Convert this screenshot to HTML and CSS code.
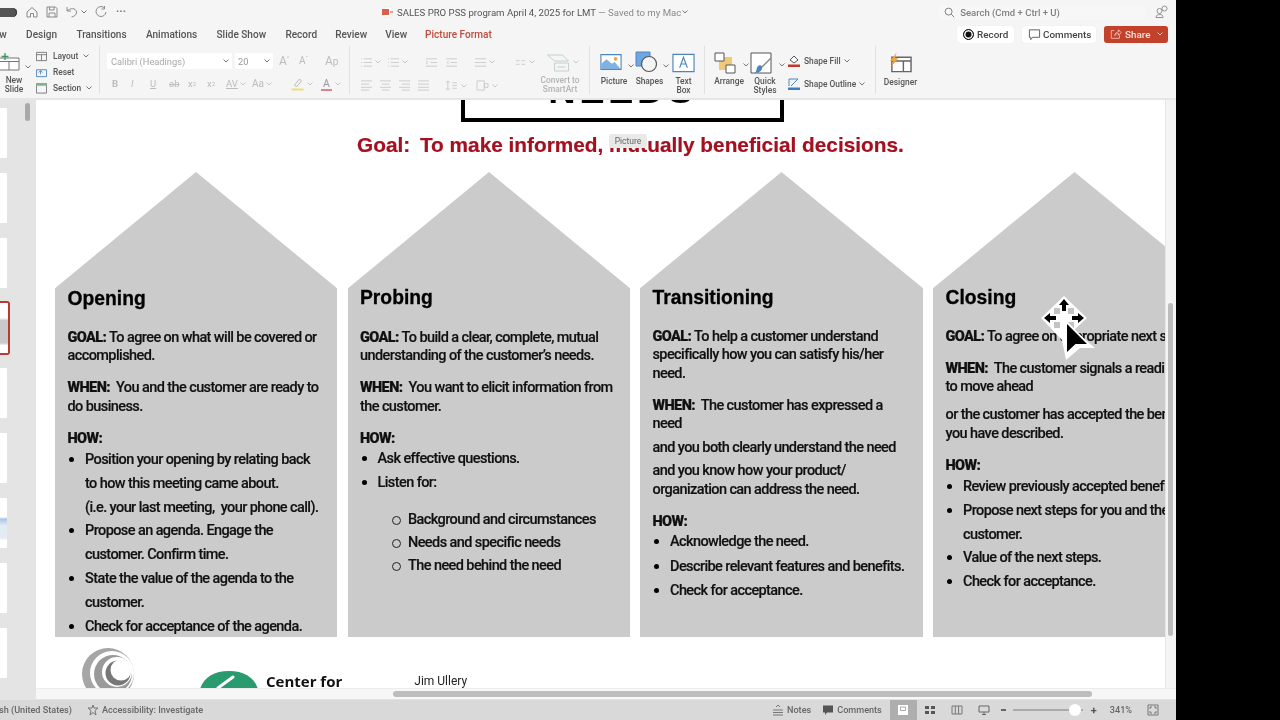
FILE: index.html
```html
<!DOCTYPE html>
<html lang="en">
<head>
<meta charset="utf-8">
<title>SALES PRO PSS program</title>
<link rel="stylesheet" href="styles.css">
</head>
<body>
<div class="app">
  <header class="topbar">
    <span class="toggle"></span>
    <svg class="qa home" viewBox="0 0 12 12"><path d="M1 6 6 1.500 11 6V11H7.500V7.500h-3V11H1Z"/></svg>
    <svg class="qa save" viewBox="0 0 12 12"><path d="M1 1H9.500L11 2.500V11H1ZM3.500 1V4H8V1M3 11V7H9V11"/></svg>
    <svg class="qa undo" viewBox="0 0 12 12"><path d="M1 1V5H5M1 5C4 2 10 1.500 10.500 6 10.800 9 8 10.500 5.500 11"/></svg>
    <svg class="caret qa-caret" viewBox="0 0 8 8"><path d="M1.500 2.500 4 5 6.500 2.500"/></svg>
    <svg class="qa redo" viewBox="0 0 12 12"><path d="M9 1.500A5 5 0 1 0 11 6M9.500 0V3H6.500"/></svg>
    <span class="dots">···</span>
    <svg class="ppt" viewBox="0 0 12 12"><path d="M2 1H10V11H2Z" fill="#fff" stroke="#ddd" stroke-width=".5"/><path d="M0 3H7V9H0Z" fill="#d8604a"/><path d="M8 5h3v2H8Z" fill="#e9a092"/></svg>
    <span class="doc">SALES PRO PSS program April 4, 2025 for LMT <span class="muted">— Saved to my Mac</span></span>
    <svg class="caret doc-caret" viewBox="0 0 8 8"><path d="M1.500 2.500 4 5 6.500 2.500"/></svg>
    <div class="search">
      <svg viewBox="0 0 12 12"><circle cx="5" cy="5" r="3.800"/><path d="M8 8 11 11"/></svg>
      <span>Search (Cmd + Ctrl + U)</span>
    </div>
    <svg class="people" viewBox="0 0 14 14"><circle cx="9.500" cy="3.500" r="2.500"/><circle cx="4.500" cy="6" r="2.500"/><path d="M1 12.500C1 10 3 9.500 5 9.500 7 9.500 8 10.500 8 12.500Z"/></svg>
  </header>

  <nav class="tabs">
    <span class="tab t-draw">Draw</span>
    <span class="tab">Design</span>
    <span class="tab">Transitions</span>
    <span class="tab">Animations</span>
    <span class="tab">Slide Show</span>
    <span class="tab tight">Record</span>
    <span class="tab tight">Review</span>
    <span class="tab tight">View</span>
    <span class="tab active">Picture Format</span>
    <div class="actions">
      <button class="btn rec"><span class="rec-dot"></span>Record</button>
      <button class="btn com"><svg viewBox="0 0 14 14"><path d="M1.500 2H12.500V10H5L3 12.500V10H1.500Z"/></svg>Comments</button>
      <button class="btn share"><svg viewBox="0 0 14 14"><path d="M5 3H1.500V12H11V8.500M5.500 9C6 6 8 4.500 10 4.500V2L13 5.500 10 8.500V6.500C8.500 6.500 7 7 5.500 9Z"/></svg>Share<svg class="share-caret" viewBox="0 0 8 8"><path d="M1.500 2.500 4 5 6.500 2.500"/></svg></button>
    </div>
  </nav>

  <section class="ribbon">
    <div class="group g-slides">
      <div class="new-slide">
        <svg viewBox="0 0 24 18"><path d="M-2 5H19V17H-2ZM-2 8.500H19M9 8.500V17" fill="#fff" stroke="#777"/><path d="M5 0V7M1.500 3.500H8.500" stroke="#3f9a62" stroke-width="1.400" fill="none"/></svg>
        <span class="lbl">New<br>Slide</span>
      </div>
      <svg class="caret ns-caret" viewBox="0 0 8 8"><path d="M1.500 2.500 4 5 6.500 2.500"/></svg>
      <div class="slide-cmds">
        <div class="cmd"><svg viewBox="0 0 12 10"><path d="M.5.500H11.500V9.500H.5ZM.5 3H11.500M6 3V9.500"/></svg>Layout<svg class="caret" viewBox="0 0 8 8"><path d="M1.500 2.500 4 5 6.500 2.500"/></svg></div>
        <div class="cmd"><svg class="blue" viewBox="0 0 12 10"><path d="M.5 2H11.500V9.500H.5ZM3 5 5 3 7 5M5 3V7"/></svg>Reset</div>
        <div class="cmd"><svg viewBox="0 0 12 12"><path d="M.5 1.500H11.500V11H.5Z"/><path d="M0 0H12V3H0Z" fill="#7db48f" stroke="none"/></svg>Section<svg class="caret" viewBox="0 0 8 8"><path d="M1.500 2.500 4 5 6.500 2.500"/></svg></div>
      </div>
    </div>

    <div class="group g-font">
      <div class="row">
        <span class="field font-name">Calibri (Headings)<svg class="caret" viewBox="0 0 8 8"><path d="M1.500 2.500 4 5 6.500 2.500"/></svg></span>
        <span class="field font-size">20<svg class="caret" viewBox="0 0 8 8"><path d="M1.500 2.500 4 5 6.500 2.500"/></svg></span>
        <span class="dim size-a">A<sup>^</sup></span>
        <span class="dim size-b">A<sup>ˇ</sup></span>
        <span class="dim size-c">A<small>p</small></span>
      </div>
      <div class="row fmt">
        <span class="dim b">B</span><span class="dim i">I</span><span class="dim u">U</span><span class="dim s">ab</span><span class="dim x">x<sup>2</sup></span><span class="dim x">x<sub>2</sub></span>
        <span class="dim av"><u>AV</u><svg class="caret" viewBox="0 0 8 8"><path d="M1.500 2.500 4 5 6.500 2.500"/></svg></span>
        <span class="dim aa">Aa<svg class="caret" viewBox="0 0 8 8"><path d="M1.500 2.500 4 5 6.500 2.500"/></svg></span>
        <svg class="hl" viewBox="0 0 12 14"><path d="M3 8 8 2 10 4 5 10Z" fill="none" stroke="#bbb"/><path d="M0 11.500H12V13.500H0Z" fill="#e6e07c"/></svg>
        <svg class="caret pale" viewBox="0 0 8 8"><path d="M1.500 2.500 4 5 6.500 2.500"/></svg>
        <span class="fc">A</span>
        <svg class="caret pale" viewBox="0 0 8 8"><path d="M1.500 2.500 4 5 6.500 2.500"/></svg>
      </div>
    </div>

    <div class="group g-para">
      <div class="row icons">
        <svg class="pi" viewBox="0 0 14 12"><path d="M1 2H2M4 2H13M1 6H2M4 6H13M1 10H2M4 10H13"/></svg>
        <svg class="caret pale" viewBox="0 0 8 8"><path d="M1.500 2.500 4 5 6.500 2.500"/></svg>
        <svg class="pi" viewBox="0 0 14 12"><path d="M1 2H2M4 2H13M1 6H2M4 6H13M1 10H2M4 10H13"/></svg>
        <svg class="caret pale" viewBox="0 0 8 8"><path d="M1.500 2.500 4 5 6.500 2.500"/></svg>
        <svg class="pi" viewBox="0 0 14 12"><path d="M1 2H13M6 6H13M1 10H13M1 4.500 3 6 1 7.500"/></svg>
        <svg class="pi" viewBox="0 0 14 12"><path d="M1 2H13M6 6H13M1 10H13M4 4.500 2 6 4 7.500"/></svg>
        <svg class="pi" viewBox="0 0 14 12"><path d="M1 2H13M1 6H13M1 10H13"/></svg>
        <svg class="caret pale" viewBox="0 0 8 8"><path d="M1.500 2.500 4 5 6.500 2.500"/></svg>
        <svg class="pi" viewBox="0 0 14 12"><path d="M2 4H6M8 4H12M2 8H6M8 8H12"/></svg>
        <svg class="caret pale" viewBox="0 0 8 8"><path d="M1.500 2.500 4 5 6.500 2.500"/></svg>
        <svg class="smart" viewBox="0 0 24 20"><path d="M1 2H16L22 8H8ZM8 10H22V18H8ZM11 14H19"/></svg>
        <svg class="caret pale" viewBox="0 0 8 8"><path d="M1.500 2.500 4 5 6.500 2.500"/></svg>
      </div>
      <div class="row icons second">
        <svg class="pi" viewBox="0 0 14 12"><path d="M1 1H13M1 4.500H10M1 8H13M1 11H10"/></svg>
        <svg class="pi" viewBox="0 0 14 12"><path d="M1 1H13M3 4.500H11M1 8H13M3 11H11"/></svg>
        <svg class="pi" viewBox="0 0 14 12"><path d="M1 1H13M4 4.500H13M1 8H13M4 11H13"/></svg>
        <svg class="pi" viewBox="0 0 14 12"><path d="M1 1H13M1 4.500H13M1 8H13M1 11H13"/></svg>
        <svg class="pi" viewBox="0 0 14 12"><path d="M3 1V11M1 3 3 1 5 3M1 9 3 11 5 9M8 3H13M8 6H13M8 9H13"/></svg>
        <svg class="caret pale" viewBox="0 0 8 8"><path d="M1.500 2.500 4 5 6.500 2.500"/></svg>
        <svg class="pi" viewBox="0 0 14 12"><path d="M1 1H9V11H1ZM9 4H13V8H9Z"/></svg>
        <svg class="caret pale" viewBox="0 0 8 8"><path d="M1.500 2.500 4 5 6.500 2.500"/></svg>
      </div>
      <span class="lbl smart-lbl">Convert to<br>SmartArt</span>
    </div>

    <div class="group g-insert">
      <div class="tool w-pic">
        <svg viewBox="0 0 24 18"><path d="M1 1H23V17H1Z" fill="#fff" stroke="#4b86bd" stroke-width="1.200"/><path d="M1.500 16.500V11L7 6 13 11 16 9 22.500 16.500Z" fill="#7fb2e3"/><circle cx="17" cy="5.500" r="2" fill="#e6a44c"/></svg>
        <span class="lbl">Picture</span>
      </div>
      <svg class="caret tool-caret" viewBox="0 0 8 8"><path d="M1.500 2.500 4 5 6.500 2.500"/></svg>
      <div class="tool w-shape">
        <svg viewBox="0 0 24 22"><path d="M1 1H15V15H1Z" fill="#6ea6e4" stroke="#4b86bd"/><circle cx="14" cy="13" r="7.500" fill="#f5f5f5" stroke="#555" stroke-width="1.200"/></svg>
        <span class="lbl">Shapes</span>
      </div>
      <svg class="caret tool-caret" viewBox="0 0 8 8"><path d="M1.500 2.500 4 5 6.500 2.500"/></svg>
      <div class="tool w-box">
        <svg viewBox="0 0 24 20"><path d="M1 1H23V19H1Z" fill="#fff" stroke="#4b86bd" stroke-width="1.200"/><path d="M8 15 12 4 16 15M9.500 11H14.500" fill="none" stroke="#4b86bd" stroke-width="1.200"/></svg>
        <span class="lbl">Text<br>Box</span>
      </div>
    </div>

    <div class="group g-arrange">
      <div class="tool w-arr">
        <svg viewBox="0 0 22 22"><path d="M5 5H18V18H5Z" fill="#f1c878"/><path d="M1 1H10V9H1ZM12 13H21V21H12Z" fill="#fff" stroke="#555"/></svg>
        <span class="lbl">Arrange</span>
      </div>
      <svg class="caret tool-caret" viewBox="0 0 8 8"><path d="M1.500 2.500 4 5 6.500 2.500"/></svg>
      <div class="tool w-quick">
        <svg viewBox="0 0 24 22"><path d="M1 1H21V21H1Z" fill="#fff" stroke="#555"/><path d="M21 6 12 15" stroke="#888" stroke-width="1.500"/><path d="M8 14C11 12 13 15 12 17 11 20 7 21 5 21 7 19 6 16 8 14Z" fill="#4b86bd"/></svg>
        <span class="lbl">Quick<br>Styles</span>
      </div>
      <svg class="caret tool-caret" viewBox="0 0 8 8"><path d="M1.500 2.500 4 5 6.500 2.500"/></svg>
      <div class="shape-cmds">
        <div class="cmd"><svg viewBox="0 0 12 12"><path d="M6 1 10 5 6 8 2 5Z" fill="#fff" stroke="#555"/><path d="M0 9.500H12V12H0Z" fill="#c0392b"/></svg>Shape Fill<svg class="caret" viewBox="0 0 8 8"><path d="M1.500 2.500 4 5 6.500 2.500"/></svg></div>
        <div class="cmd"><svg viewBox="0 0 12 12"><path d="M1 1H10M1 1V8M3 8 10 1" fill="none" stroke="#4b86bd"/><path d="M0 9.500H12V12H0Z" fill="#3d7fc4"/></svg>Shape Outline<svg class="caret" viewBox="0 0 8 8"><path d="M1.500 2.500 4 5 6.500 2.500"/></svg></div>
      </div>
    </div>

    <div class="group g-design">
      <div class="tool w-des">
        <svg viewBox="0 0 24 22"><path d="M3 5H23V20H3ZM3 9H23M15 9V20" fill="#fff" stroke="#666" stroke-width="1.500"/><path d="M8 0 1 9H5L2 15 10 6H6Z" fill="#eea43f"/></svg>
        <span class="lbl">Designer</span>
      </div>
    </div>
  </section>

  <main class="main">
    <aside class="thumbs">
      <div class="thumb"></div><div class="thumb"></div><div class="thumb"></div>
      <div class="thumb selected"></div>
      <div class="thumb"></div><div class="thumb"></div><div class="thumb tint"></div><div class="thumb"></div><div class="thumb"></div>
      <span class="thumb-bar"></span>
    </aside>
    <div class="workspace">
      <div class="work-row">
        <div class="canvas">
          <div class="needs"><span>NEEDS</span></div>
          <h1 class="goal"><span class="goal-lead">Goal:</span> To make informed, mutually beneficial decisions.</h1>
          <div class="columns">
            <article class="col c1">
              <h2>Opening</h2>
              <p><b>GOAL:</b> To agree on what will be covered or<br>accomplished.</p>
              <p class="gap"><b>WHEN:</b>&nbsp; You and the customer are ready to<br>do business.</p>
              <p class="gap"><b>HOW:</b></p>
              <ul>
                <li>Position your opening by relating back<br>to how this meeting came about.<br>(i.e. your last meeting,&nbsp; your phone call).</li>
                <li>Propose an agenda. Engage the<br>customer. Confirm time.</li>
                <li>State the value of the agenda to the<br>customer.</li>
                <li>Check for acceptance of the agenda.</li>
              </ul>
            </article>
            <article class="col c2">
              <h2>Probing</h2>
              <p><b>GOAL:</b> To build a clear, complete, mutual<br>understanding of the customer’s needs.</p>
              <p class="gap"><b>WHEN:</b>&nbsp; You want to elicit information from<br>the customer.</p>
              <p class="gap"><b>HOW:</b></p>
              <ul>
                <li>Ask effective questions.</li>
                <li>Listen for:</li>
              </ul>
              <ul class="sub">
                <li>Background and circumstances</li>
                <li>Needs and specific needs</li>
                <li>The need behind the need</li>
              </ul>
            </article>
            <article class="col c3">
              <h2>Transitioning</h2>
              <p><b>GOAL:</b> To help a customer understand<br>specifically how you can satisfy his/her<br>need.</p>
              <p class="gap"><b>WHEN:</b>&nbsp; The customer has expressed a<br>need</p>
              <p class="near">and you both clearly understand the need</p>
              <p class="near">and you know how your product/<br>organization can address the need.</p>
              <p class="gap"><b>HOW:</b></p>
              <ul>
                <li>Acknowledge the need.</li>
                <li>Describe relevant features and benefits.</li>
                <li>Check for acceptance.</li>
              </ul>
            </article>
            <article class="col c4">
              <h2>Closing</h2>
              <p><b>GOAL:</b> To agree on appropriate next steps.</p>
              <p class="gap"><b>WHEN:</b>&nbsp; The customer signals a readiness<br>to move ahead</p>
              <p class="mid">or the customer has accepted the benefits<br>you have described.</p>
              <p class="gap"><b>HOW:</b></p>
              <ul>
                <li>Review previously accepted benefits.</li>
                <li>Propose next steps for you and the<br>customer.</li>
                <li>Value of the next steps.</li>
                <li>Check for acceptance.</li>
              </ul>
            </article>
          </div>
          <footer class="slide-foot">
            <svg class="swirl" viewBox="0 0 52 52">
              <circle cx="26" cy="26" r="26" fill="#a6a6a6"/>
              <circle cx="30" cy="25" r="22" fill="#fff"/>
              <circle cx="31" cy="26" r="19" fill="#9a9a9a"/>
              <circle cx="35" cy="24" r="15" fill="#fff"/>
              <circle cx="36" cy="25" r="12.500" fill="#777"/>
              <circle cx="39" cy="22" r="10.500" fill="#fff"/>
            </svg>
            <svg class="dome" viewBox="0 0 58 18"><path d="M0 18C4 6 14 0 29 0 44 0 54 6 58 18Z" fill="#2a9a6f"/><path d="M18 17 33 6" stroke="#fff" stroke-width="3" stroke-linecap="round"/></svg>
            <span class="center-for">Center for</span>
            <span class="jim">Jim Ullery</span>
          </footer>
          <span class="tooltip">Picture</span>
          <svg class="cursor" viewBox="0 0 54 64">
            <path d="M23 0 46 22 33 34 54 52 39 52 25 64 21 44 0 22Z" fill="#fff"/>
            <path d="M13 12H19V18H13ZM27 12H33V18H27ZM13 26H19V32H13ZM27 26H33V32H27Z" fill="#c4c4c4"/>
            <path d="M23 3 28 9H25V15H21V9H18ZM3 22 9 17V20H15V24H9V27ZM43 22 37 17V20H31V24H37V27Z" fill="#000"/>
            <path d="M25 24V60L35 50H50Z" fill="#fff"/>
            <path d="M26 28V56L34.500 48H46Z" fill="#000"/>
          </svg>
        </div>
        <div class="vscroll"><span></span></div>
      </div>
      <div class="hscroll"><span></span></div>
    </div>
  </main>

  <footer class="status">
    <span class="lang">English (United States)</span>
    <svg class="a11y" viewBox="0 0 12 12"><path d="M6 1 7 4H11L8 6.500 9 11 6 8.500 3 11 4 6.500 1 4H5Z"/></svg>
    <span>Accessibility: Investigate</span>
    <div class="status-right">
      <svg class="st-ic" viewBox="0 0 12 12"><path d="M1 6H11M1 8.500H11M1 11H11M4 3 6 1 8 3"/></svg>
      <span>Notes</span>
      <svg class="st-ic fill c-ic" viewBox="0 0 12 12"><path d="M1 1.500H11V8.500H5L3 11V8.500H1Z"/></svg>
      <span>Comments</span>
      <span class="view on"><svg viewBox="0 0 12 12"><path d="M1 1H11V11H1Z" fill="#fff"/><path d="M3.500 3H8.500V6.500H3.500Z" fill="none" stroke="#aaa"/></svg></span>
      <span class="view"><svg viewBox="0 0 12 12"><path d="M1 2H5V5H1ZM7 2H11V5H7ZM1 7H5V10H1ZM7 7H11V10H7Z" fill="#555"/></svg></span>
      <span class="view"><svg viewBox="0 0 12 12"><path d="M1 2H11V10H1ZM4.300 2V10M7.600 2V10" fill="none" stroke="#777"/></svg></span>
      <span class="view"><svg viewBox="0 0 12 12"><path d="M1 2H11V8H1ZM6 8V10.500M4 10.500H8" fill="none" stroke="#666"/></svg></span>
      <span class="minus"></span>
      <span class="slider"><i></i></span>
      <span class="plus">+</span>
      <span class="zoom">341%</span>
      <svg class="st-ic fit" viewBox="0 0 12 12"><path d="M1 1H11V11H1ZM3 5V3H5M9 5V3H7M3 7V9H5M9 7V9H7"/></svg>
    </div>
  </footer>
</div>
</body>
</html>
```

FILE: styles.css
```css
* { box-sizing: border-box; }
html, body { margin: 0; height: 100%; background: #000; overflow: hidden; }
body { font-family: Roboto, "Liberation Sans", sans-serif; color: #333; }
svg { display: block; flex-shrink: 0; }
.app { width: 1176px; height: 720px; display: flex; flex-direction: column; background: #f5f5f5; overflow: hidden; filter: blur(.35px); }

/* title bar */
.topbar { height: 22px; flex-shrink: 0; display: flex; align-items: center; padding-top: 2px; font-size: 9.500px; }
.toggle { width: 17px; height: 9px; border-radius: 0 5px 5px 0; background: #555; box-shadow: inset -1px 0 0 #333; margin-right: 10px; }
.qa { width: 12px; height: 12px; fill: none; stroke: #8a8a8a; stroke-width: 1; }
.home { margin-left: -1px; }
.save { margin-left: 8px; }
.undo { margin-left: 8px; }
.redo { margin-left: 7px; }
.caret { width: 8px; height: 8px; fill: none; stroke: #777; stroke-width: 1; }
.caret.pale { stroke: #c6c6c6; }
.qa-caret { margin-left: 2px; }
.dots { margin-left: 9px; width: 12px; color: #777; font-size: 11px; line-height: 10px; font-weight: 700; }
.ppt { width: 12px; height: 12px; margin-left: 254px; }
.doc { margin-left: 3px; color: #555; white-space: nowrap; font-size: 9.600px; }
.muted { color: #8a8a8a; }
.search { width: 206px; height: 15px; margin-left: 250px; display: flex; align-items: center; gap: 5px; padding-left: 5px; color: #808080; font-size: 9.500px; font-weight: 500; background: #f7f7f7; }
.search svg { width: 11px; height: 11px; fill: none; stroke: #777; }
.people { width: 14px; height: 14px; margin-left: 10px; fill: none; stroke: #888; stroke-width: .9; }

/* tabs */
.tabs { height: 24px; flex-shrink: 0; display: flex; align-items: center; font-size: 10.050px; font-weight: 500; color: #555; }
.tab { white-space: nowrap; margin-right: 19.300px; }
.tab.tight { margin-right: 18px; }
.t-draw { margin-left: -16px; }
.active { color: #c24a3b; margin-right: 0; }
.actions { margin-left: auto; margin-right: 8px; display: flex; gap: 8px; }
.btn { height: 17px; border: 0; border-radius: 3px; background: #fff; display: flex; align-items: center; padding: 0 0 0 6px; font: 500 9.900px Roboto, sans-serif; color: #444; box-shadow: 0 0 1px rgba(0,0,0,.12); }
.rec { width: 57px; gap: 3px; }
.rec-dot { width: 11px; height: 11px; border-radius: 50%; background: #111; border: 1.500px solid #111; box-shadow: inset 0 0 0 1.500px #fff; }
.com { width: 74px; gap: 2px; }
.com svg { width: 13px; height: 13px; fill: none; stroke: #555; }
.share { width: 64px; gap: 3px; background: #c2412a; color: #f9e3dd; }
.share svg { width: 12px; height: 12px; fill: none; stroke: #f3c4b9; }
.share .share-caret { width: 8px; height: 8px; margin-left: 3px; }

/* ribbon */
.ribbon { height: 52px; flex-shrink: 0; display: flex; }
.group { position: relative; height: 48px; border-right: 1px solid #e1e1e1; display: flex; flex-shrink: 0; }
.lbl { font-size: 8.400px; line-height: 9px; font-weight: 500; color: #555; text-align: center; white-space: nowrap; display: block; }
.g-slides { width: 100px; }
.new-slide { width: 28px; }
.new-slide svg { width: 24px; height: 18px; margin-top: 7px; }
.new-slide .lbl { margin-top: 5px; }
.ns-caret { margin-top: 17px; margin-left: -4px; }
.slide-cmds { margin-left: 4px; padding-top: 4px; display: flex; flex-direction: column; gap: 4px; }
.cmd { height: 12.500px; display: flex; align-items: center; gap: 6px; font-size: 8.400px; font-weight: 500; color: #555; white-space: nowrap; }
.cmd > svg:first-child { width: 11px; height: 11px; fill: none; stroke: #777; }
.cmd > svg.blue { stroke: #4b86bd; }
.cmd .caret { margin-left: -2px; }

.g-font { width: 250px; flex-direction: column; padding: 7px 0 0 7px; }
.row { display: flex; align-items: center; }
.field { height: 16px; background: #fff; border-radius: 2px; display: flex; align-items: center; justify-content: space-between; color: #a8a8a8; font-size: 9.300px; padding: 0 2px 0 4px; }
.font-name { width: 125px; }
.font-size { width: 38px; margin-left: 3px; padding-left: 3px; color: #999; }
.dim { color: #bcbcbc; font-size: 10px; line-height: 12px; }
.dim sup, .dim sub { font-size: 6px; line-height: 0; }
.size-a { margin-left: 6px; font-size: 12px; width: 20px; }
.size-b { width: 26px; }
.size-c { font-size: 12px; }
.fmt { margin-top: 8px; padding-left: 5px; height: 14px; }
.fmt .dim { width: 19px; flex-shrink: 0; font-size: 9.500px; display: flex; align-items: center; }
.fmt .dim .caret { stroke: #c6c6c6; margin-left: 1px; }
.b { font-weight: 700; }
.i { font-style: italic; }
.u { text-decoration: underline; }
.s { text-decoration: line-through; }
.fmt .av { width: 26px; }
.fmt .aa { width: 32px; font-size: 10px; }
.hl { width: 13px; height: 14px; margin-left: 7px; }
.hl + .caret { margin-left: 2px; }
.fc { margin-left: 7px; color: #999; font-size: 10.500px; line-height: 11px; border-bottom: 2px solid #e0808a; width: 11px; text-align: center; }
.fc + .caret { margin-left: 2px; }

.g-para { width: 240px; flex-direction: column; padding: 7px 0 0 10px; }
.icons { height: 18px; }
.pi { width: 13px; height: 11px; fill: none; stroke: #c9c9c9; }
.smart { width: 25px; height: 20px; fill: none; stroke: #c4d1c8; margin-top: 2px; }
.icons .caret { margin-left: 1px; }
.icons:first-child .pi:nth-child(3) { margin-left: 5px; }
.icons:first-child .pi:nth-child(5) { margin-left: 16px; }
.icons:first-child .pi:nth-child(6) { margin-left: 7px; }
.icons:first-child .pi:nth-child(7) { margin-left: 16px; }
.icons:first-child .pi:nth-child(9) { margin-left: 18px; }
.icons:first-child .smart { margin-left: 10px; }
.second { margin-top: 6px; }
.second .pi { margin-right: 6px; }
.second .pi:nth-child(5) { margin-left: 9px; margin-right: 1px; }
.second .pi:nth-child(7) { margin-left: 8px; margin-right: 1px; }
.smart-lbl { position: absolute; left: 187px; top: 30px; width: 46px; color: #b3b3b3; }

.g-insert { width: 115px; padding: 7px 0 0 9px; }
.tool { display: flex; flex-direction: column; align-items: center; }
.tool svg { height: 20px; }
.tool .lbl { margin-top: 4px; }
.tool-caret { margin-top: 9px; margin-left: -2px; }
.w-pic { width: 30px; } .w-pic svg { width: 22px; height: 18px; align-self: flex-start; margin-left: 1px; }
.w-pic .lbl { margin-top: 6px; }
.w-shape { width: 29px; } .w-shape svg { width: 24px; height: 22px; margin-top: -2px; align-self: flex-start; }
.w-box { width: 27px; } .w-box svg { width: 23px; }
.g-arrange { width: 171px; padding: 6px 0 0 9px; }
.g-arrange .tool svg { height: 22px; align-self: flex-start; }
.g-arrange .tool .lbl { margin-top: 3px; }
.w-arr { width: 30px; } .w-arr svg { width: 22px; }
.w-quick { width: 30px; } .w-quick svg { width: 24px; }
.shape-cmds { margin-left: 2px; display: flex; flex-direction: column; gap: 10px; padding-top: 3px; }
.shape-cmds .cmd { gap: 4px; }
.shape-cmds .cmd > svg:first-child { width: 12px; height: 12px; stroke: none; }
.g-design { border-right: 0; padding: 5px 0 0 7px; }
.w-des { width: 35px; } .w-des svg { width: 23px; height: 22px; margin-top: 1px; }
.w-des .lbl { margin-top: 4px; }

/* main */
.main { height: 602px; flex-shrink: 0; display: flex; border-top: 2px solid #e6e6e6; }
.thumbs { position: relative; width: 36px; flex-shrink: 0; height: 600px; background: #e4e4e4; overflow: hidden; padding-top: 8px; display: flex; flex-direction: column; gap: 15px; }
.thumb { width: 7px; height: 50px; background: #fff; border-radius: 0 1px 1px 0; flex-shrink: 0; }
.thumb.selected { width: 10px; height: 54px; margin: -2px 0; border: 2px solid #b53b33; border-left: 0; border-radius: 0 3px 3px 0; background: linear-gradient(#fff 30%, #c9c9c9 35%, #c9c9c9 80%, #fff 85%); }
.thumb.tint { background: linear-gradient(#fff 38%, #a9c6e6 42%, #e3ebf4 55%, #e3ebf4 80%, #fff 85%); }
.thumb-bar { position: absolute; left: 25px; top: 3px; width: 5px; height: 18px; border-radius: 3px; background: #a9a9a9; }
.workspace { width: 1140px; display: flex; flex-direction: column; }
.work-row { display: flex; height: 588px; }
.canvas { position: relative; width: 1129px; height: 588px; background: #fff; overflow: hidden; flex-shrink: 0; }
.vscroll { width: 11px; background: #f4f4f4; border-left: 1px solid #e6e6e6; }
.vscroll span { display: block; width: 5px; height: 333px; margin: 203px 0 0 2px; border-radius: 3px; background: #bcbcbc; }
.hscroll { height: 12px; background: #f7f7f7; border-top: 1px solid #ececec; padding: 2px 0 0 357px; border-bottom: 1px solid #e2e2e2; }
.hscroll span { display: block; width: 699px; height: 6px; border-radius: 3px; background: #bdbdbd; }

/* slide */
.needs { width: 323px; height: 22px; margin-left: 425px; border: 4px solid #000; border-top: 0; display: flex; justify-content: center; align-items: flex-end; overflow: hidden; }
.needs span { font: 700 38px/18px "Liberation Sans", sans-serif; color: #000; letter-spacing: 3.500px; position: relative; top: -19px; }
.goal { margin: 11px 0 0 321px; font: 700 20.800px/24px "Liberation Sans", sans-serif; color: #a50f1f; white-space: nowrap; -webkit-text-stroke: .2px #a50f1f; }
.goal-lead { margin-right: 4px; }
.columns { display: flex; margin: 15px 0 0 19px; width: 1200px; }
.col { flex-shrink: 0; width: 283px; height: 465px; background: #cbcbcb; clip-path: polygon(50% 0, 100% 25%, 100% 100%, 0 100%, 0 25%); padding: 114px 0 0 12.500px; font-size: 14.500px; line-height: 18.500px; color: #111; font-weight: 500; white-space: nowrap; letter-spacing: -.59px; -webkit-text-stroke: .15px #111; }
.c1 { width: 282px; margin-right: 11px; padding-top: 115px; }
.c2 { width: 282px; margin-right: 10px; padding-left: 12px; }
.c3 { margin-right: 10px; }
.col h2 { margin: 0 0 17.500px; font: 700 19.300px/24px "Liberation Sans", sans-serif; letter-spacing: 0; color: #000; -webkit-text-stroke: .3px #000; }
.c2 h2 { margin-bottom: 18.500px; }
.col p { margin: 0; }
.col b { font-weight: 900; }
.col .gap { margin-top: 13.500px; }
.col .near { margin-top: 5px; }
.col .mid { margin-top: 9.500px; }
.col ul { margin: 0; padding: 0 0 0 17.500px; list-style: none; }
.col li { position: relative; line-height: 23.800px; }
.col li::before { content: ""; position: absolute; left: -16px; top: 9px; width: 5px; height: 5px; border-radius: 50%; background: #000; }
.c2 ul { margin-top: -1px; }
.col .sub { margin-top: 13px; padding-left: 48px; }
.col .sub li { line-height: 23px; }
.col .sub li::before { left: -16px; top: 8px; width: 7px; height: 7px; background: none; border: 1px solid #222; }
.c3 ul { margin-top: -1px; }
.c3 li { line-height: 24.500px; }
.slide-foot { height: 51px; display: flex; overflow: hidden; position: relative; }
.swirl { width: 52px; height: 52px; margin: 11px 0 0 46px; }
.dome { width: 58px; height: 18px; margin: 34px 0 0 66px; }
.center-for { margin: 36px 0 0 8px; font: 700 15px/17px "Open Sans", sans-serif; color: #111; white-space: nowrap; }
.jim { margin: 36px 0 0 72px; font-size: 12px; line-height: 16px; color: #222; white-space: nowrap; }
.tooltip { position: absolute; left: 573px; top: 34px; width: 38px; height: 14px; background: #e9e9e9; border-radius: 2px; font-size: 8.500px; line-height: 14px; text-align: center; color: #666; }
.cursor { position: absolute; left: 1005px; top: 196px; width: 54px; height: 64px; }

/* status */
.status { height: 20px; flex-shrink: 0; display: flex; align-items: center; background: #d9d9d9; color: #666; font-size: 9.100px; font-weight: 500; gap: 3px; white-space: nowrap; }
.lang { margin-left: -21px; margin-right: 12px; }
.a11y { width: 12px; height: 12px; fill: none; stroke: #777; }
.status-right { margin-left: auto; display: flex; align-items: center; height: 20px; padding-right: 17px; }
.st-ic { width: 12px; height: 12px; fill: none; stroke: #777; margin-right: 3px; }
.st-ic.fill { fill: #555; stroke: none; }
.c-ic { margin-left: 11px; }
.view { width: 27px; height: 20px; display: flex; align-items: center; justify-content: center; }
.view svg { width: 12px; height: 12px; }
.view.on { background: #aeaeae; margin-left: 8px; }
.minus { width: 5px; height: 2px; background: #666; margin-left: 3px; }
.slider { position: relative; width: 70px; height: 2px; margin-left: 7px; background: #aaa; }
.slider i { position: absolute; left: 56px; top: -5px; width: 12px; height: 12px; border-radius: 50%; background: #fff; }
.plus { margin-left: 8px; font-size: 11px; font-weight: 700; color: #555; }
.zoom { margin-left: 13px; }
.fit { margin: 0 0 0 15px; }
```
